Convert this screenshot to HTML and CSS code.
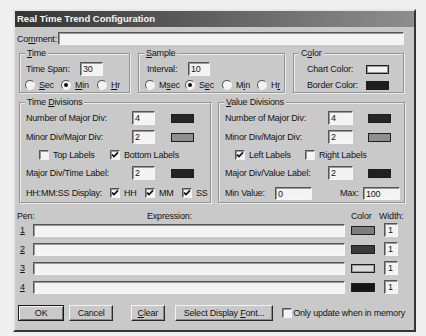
FILE: index.html
```html
<!DOCTYPE html>
<html lang="en">
<head>
    <meta charset="UTF-8" />
    <meta name="viewport" content="width=device-width, initial-scale=1.0" />
    <title>Real Time Trend Configuration</title>
    <link rel="stylesheet" href="styles.css">
</head>
<body>
    <div class="dialog">
        <div class="titlebar">Real Time Trend Configuration</div>

        <div class="content">
            <div class="comment-row">
                <span class="comment-label">Co<u>m</u>ment:</span>
                <div class="field comment-field"></div>
            </div>

            <div class="group-row top-row">
                <fieldset class="group time-group">
                    <legend><u>T</u>ime</legend>
                    <div class="line">
                        <span class="lbl w54">Time Span:</span>
                        <div class="field w23">30</div>
                    </div>
                    <div class="opts time-opts">
                        <span class="opt w36"><span class="radio"></span><span><u>S</u>ec</span></span>
                        <span class="opt w36"><span class="radio on"></span><span><u>M</u>in</span></span>
                        <span class="opt"><span class="radio"></span><span><u>H</u>r</span></span>
                    </div>
                </fieldset>

                <fieldset class="group sample-group">
                    <legend><u>S</u>ample</legend>
                    <div class="line">
                        <span class="lbl w41 ml2">Interval:</span>
                        <div class="field w22">10</div>
                    </div>
                    <div class="opts">
                        <span class="opt w40"><span class="radio"></span><span>M<u>s</u>ec</span></span>
                        <span class="opt w37"><span class="radio on"></span><span>S<u>e</u>c</span></span>
                        <span class="opt w35"><span class="radio"></span><span>M<u>i</u>n</span></span>
                        <span class="opt"><span class="radio"></span><span>H<u>r</u></span></span>
                    </div>
                </fieldset>

                <fieldset class="group color-group">
                    <legend>C<u>o</u>lor</legend>
                    <div class="line indent7">
                        <span class="lbl w59">Chart Color:</span>
                        <span class="swatch light-swatch" style="background:#f2f2f2"></span>
                    </div>
                    <div class="opts indent7">
                        <span class="lbl w59">Border Color:</span>
                        <span class="swatch" style="background:#1e1e1e"></span>
                    </div>
                </fieldset>
            </div>

            <div class="group-row mid-row">
                <fieldset class="group tdiv-group">
                    <legend>Time <u>D</u>ivisions</legend>
                    <div class="line">
                        <span class="lbl w106">Number of Major Div:</span>
                        <div class="field w23">4</div>
                        <span class="swatch gap16" style="background:#262626"></span>
                    </div>
                    <div class="line gap5">
                        <span class="lbl w106">Minor Div/Major Div:</span>
                        <div class="field w23">2</div>
                        <span class="swatch gap16" style="background:#8f8f8f"></span>
                    </div>
                    <div class="checks gap6">
                        <span class="opt w71 ml13"><span class="check"></span><span>Top Labels</span></span>
                        <span class="opt"><span class="check"><svg viewBox="0 0 8 8"><path d="M1 3.6 L3 5.6 L7 1.4"/></svg></span><span>Bottom Labels</span></span>
                    </div>
                    <div class="line gap6">
                        <span class="lbl w106">Major Div/Time Label:</span>
                        <div class="field w23">2</div>
                        <span class="swatch gap16" style="background:#222"></span>
                    </div>
                    <div class="line gap6">
                        <span class="lbl w84">HH:MM:SS Display:</span>
                        <span class="opt w35"><span class="check"><svg viewBox="0 0 8 8"><path d="M1 3.6 L3 5.6 L7 1.4"/></svg></span><span>HH</span></span>
                        <span class="opt w37"><span class="check"><svg viewBox="0 0 8 8"><path d="M1 3.6 L3 5.6 L7 1.4"/></svg></span><span>MM</span></span>
                        <span class="opt"><span class="check"><svg viewBox="0 0 8 8"><path d="M1 3.6 L3 5.6 L7 1.4"/></svg></span><span>SS</span></span>
                    </div>
                </fieldset>

                <fieldset class="group vdiv-group">
                    <legend><u>V</u>alue Divisions</legend>
                    <div class="line">
                        <span class="lbl w103">Number of Major Div:</span>
                        <div class="field w25">4</div>
                        <span class="swatch gap15" style="background:#262626"></span>
                    </div>
                    <div class="line gap5">
                        <span class="lbl w103">Minor Div/Major Div:</span>
                        <div class="field w25">2</div>
                        <span class="swatch gap15" style="background:#8f8f8f"></span>
                    </div>
                    <div class="checks gap6">
                        <span class="opt w70 ml10"><span class="check"><svg viewBox="0 0 8 8"><path d="M1 3.6 L3 5.6 L7 1.4"/></svg></span><span>Left Labels</span></span>
                        <span class="opt"><span class="check"></span><span>Right Labels</span></span>
                    </div>
                    <div class="line gap6">
                        <span class="lbl w103">Major Div/Value Label:</span>
                        <div class="field w25">2</div>
                        <span class="swatch gap15" style="background:#222"></span>
                    </div>
                    <div class="line gap6">
                        <span class="lbl w50">Min Value:</span>
                        <div class="field w37 short">0</div>
                        <span class="lbl w23 gap28">Max:</span>
                        <div class="field w37 short">100</div>
                    </div>
                </fieldset>
            </div>

            <div class="pens">
                <div class="pen-head">
                    <span class="ph-pen">Pen:</span>
                    <span class="ph-expr">Expression:</span>
                    <span class="ph-color">Color</span>
                    <span>Width:</span>
                </div>
                <div class="pen-row first">
                    <span class="pen-num"><u>1</u></span>
                    <div class="field expr"></div>
                    <span class="swatch pen-swatch" style="background:#7d7d7d"></span>
                    <div class="field width-field">1</div>
                </div>
                <div class="pen-row">
                    <span class="pen-num"><u>2</u></span>
                    <div class="field expr"></div>
                    <span class="swatch pen-swatch" style="background:#3a3a3a"></span>
                    <div class="field width-field">1</div>
                </div>
                <div class="pen-row">
                    <span class="pen-num"><u>3</u></span>
                    <div class="field expr"></div>
                    <span class="swatch pen-swatch light-swatch" style="background:#dadada"></span>
                    <div class="field width-field">1</div>
                </div>
                <div class="pen-row">
                    <span class="pen-num"><u>4</u></span>
                    <div class="field expr"></div>
                    <span class="swatch pen-swatch" style="background:#141414"></span>
                    <div class="field width-field">1</div>
                </div>
            </div>

            <div class="buttons">
                <button type="button" class="btn btn-ok">OK</button>
                <button type="button" class="btn btn-cancel">Cancel</button>
                <button type="button" class="btn btn-clear"><u>C</u>lear</button>
                <button type="button" class="btn btn-font">Select Display <u>F</u>ont...</button>
                <span class="opt only-update"><span class="check"></span><span>Only update when in memory</span></span>
            </div>
        </div>
    </div>
</body>
</html>
```

FILE: styles.css
```css
* {
    box-sizing: border-box;
}
body {
    margin: 0;
    padding: 9px 0 0 13px;
    background: #efefef;
    font-family: "Liberation Sans", Arial, sans-serif;
    font-size: 9px;
    letter-spacing: -0.2px;
    color: #141414;
}
u {
    text-underline-offset: 1px;
}
.dialog {
    width: 403px;
    background: #c9c9c9;
    border: 2px solid;
    border-color: #e6e6e6 #353535 #353535 #e6e6e6;
    padding-bottom: 9px;
}
.titlebar {
    height: 16px;
    line-height: 16px;
    padding-left: 2px;
    background: linear-gradient(to right, #343434, #8e8e8e);
    color: #f6f6f6;
    font-weight: bold;
    font-size: 9.5px;
    letter-spacing: 0;
}
.content {
    padding: 5px 9px 0 4px;
}
/* sunken edit box */
.field {
    height: 14px;
    line-height: 12px;
    padding-left: 2px;
    background: #f3f3f3;
    border: 1px solid;
    border-color: #555 #f7f7f7 #f7f7f7 #555;
    box-shadow: inset 1px 1px 0 #9a9a9a;
    white-space: nowrap;
    flex-shrink: 0;
}
.comment-row {
    display: flex;
    align-items: center;
    height: 13px;
}
.comment-label {
    width: 41px;
    margin-left: -2px;
    white-space: nowrap;
}
.comment-field {
    width: 346px;
    height: 13px;
}
.group-row {
    display: flex;
}
.top-row {
    margin-top: 2px;
    gap: 8px;
}
.mid-row {
    margin-top: 3px;
    gap: 7px;
}
.group {
    margin: 0;
    padding: 3px 4px 2px 6px;
    min-width: 0;
    border: 1px solid #949494;
    box-shadow: inset 1px 1px 0 #ececec, 1px 1px 0 #ececec;
}
.group legend {
    height: 12px;
    line-height: 12px;
    padding: 0 2px;
    margin-left: -1px;
    background: #c9c9c9;
    white-space: nowrap;
}
.time-group { width: 111px; }
.sample-group { width: 147px; }
.color-group { width: 111px; }
.tdiv-group { width: 192px; }
.vdiv-group { width: 187px; }

.line {
    display: flex;
    align-items: center;
    height: 14px;
    white-space: nowrap;
}
.opts, .checks {
    display: flex;
    align-items: center;
    height: 10px;
    margin-top: 4px;
    white-space: nowrap;
}
.time-opts {
    margin-left: -1px;
}
.indent7 {
    padding-left: 7px;
}
.gap5 { margin-top: 5px; }
.gap6 { margin-top: 6px; }
.gap15 { margin-left: 15px; }
.gap16 { margin-left: 16px; }
.gap28 { margin-left: 28px; }
.ml2 { margin-left: 2px; }
.ml10 { margin-left: 10px; }
.ml13 { margin-left: 13px; }

.lbl {
    display: inline-block;
    flex-shrink: 0;
}
.w22 { width: 22px; }
.w23 { width: 23px; }
.w25 { width: 25px; }
.w35 { width: 35px; }
.w36 { width: 36px; }
.w37 { width: 37px; }
.w40 { width: 40px; }
.w41 { width: 41px; }
.w50 { width: 50px; }
.w54 { width: 54px; }
.w59 { width: 59px; }
.w70 { width: 70px; }
.w71 { width: 71px; }
.w84 { width: 84px; }
.w103 { width: 103px; }
.w106 { width: 106px; }
.field.short {
    height: 13px;
}

.opt {
    display: inline-flex;
    align-items: center;
    flex-shrink: 0;
    white-space: nowrap;
}
.radio,
.check {
    display: inline-flex;
    align-items: center;
    justify-content: center;
    width: 10px;
    height: 10px;
    margin-right: 4px;
    flex-shrink: 0;
    background: #f4f4f4;
    border: 1px solid;
    border-color: #555 #f2f2f2 #f2f2f2 #555;
}
.radio {
    border-radius: 50%;
}
.radio.on::after {
    content: "";
    width: 4px;
    height: 4px;
    border-radius: 50%;
    background: #111;
}
.check {
    box-shadow: inset 1px 1px 0 #9a9a9a;
}
.check svg {
    width: 8px;
    height: 8px;
}
.check path {
    fill: none;
    stroke: #111;
    stroke-width: 1.7;
}
.swatch {
    display: inline-block;
    width: 23px;
    height: 9px;
    border: 1px solid #1e1e1e;
    flex-shrink: 0;
}
.light-swatch {
    box-shadow: inset 0 0 0 1px #9a9a9a;
}

/* pens */
.pens {
    margin-top: 7px;
    margin-left: -2px;
}
.pen-head {
    display: flex;
    height: 12px;
    line-height: 12px;
    white-space: nowrap;
}
.ph-pen { width: 130px; }
.ph-expr { width: 204px; }
.ph-color { width: 28px; }
.pen-row {
    display: flex;
    align-items: center;
    height: 14px;
    margin-top: 5px;
}
.pen-row.first {
    margin-top: 1px;
}
.pen-num {
    width: 16px;
    padding-left: 3px;
}
.expr {
    width: 312px;
    height: 13px;
}
.pen-swatch {
    width: 24px;
    margin-left: 6px;
}
.width-field {
    width: 14px;
    margin-left: 9px;
    padding-left: 3px;
}

/* buttons */
.buttons {
    display: flex;
    align-items: center;
    margin-top: 11px;
    margin-left: -1px;
}
.btn {
    height: 16px;
    padding: 0;
    font: inherit;
    letter-spacing: inherit;
    color: #141414;
    background: #c9c9c9;
    border: 1px solid;
    border-color: #f2f2f2 #2a2a2a #2a2a2a #f2f2f2;
    box-shadow: inset -1px -1px 0 #8a8a8a;
    white-space: nowrap;
}
.btn-ok {
    width: 49px;
    border-color: #1a1a1a;
    box-shadow: inset 1px 1px 0 #f2f2f2, inset -1px -1px 0 #6a6a6a;
}
.btn-cancel {
    width: 46px;
    margin-left: 5px;
}
.btn-clear {
    width: 36px;
    margin-left: 18px;
}
.btn-font {
    width: 104px;
    margin-left: 10px;
}
.only-update {
    margin-left: 9px;
}
.only-update .check {
    margin-right: 1px;
}
```
